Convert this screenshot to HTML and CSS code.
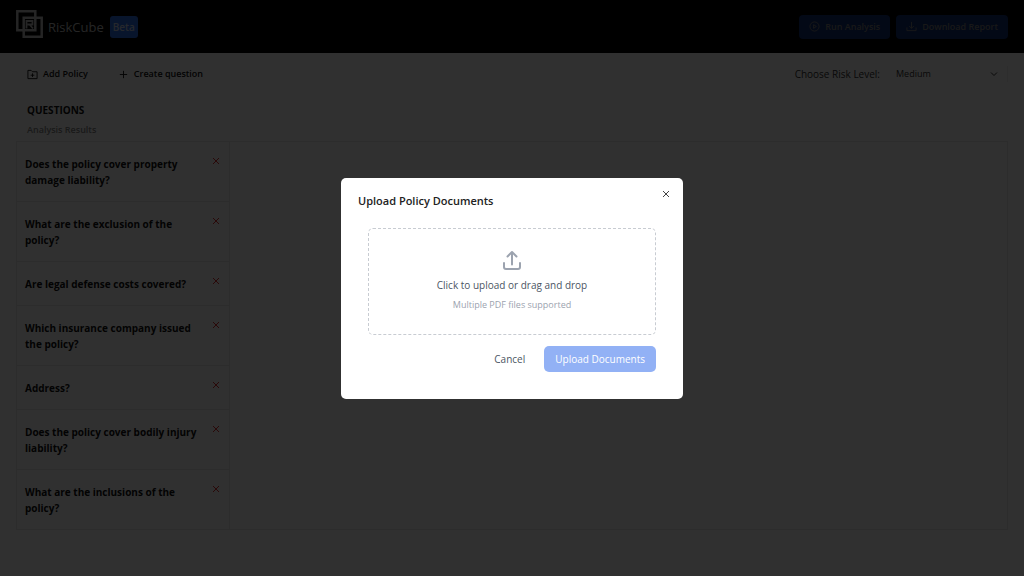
FILE: index.html
```html
<!DOCTYPE html>
<html lang="en">
<head>
<meta charset="utf-8">
<meta name="viewport" content="width=device-width, initial-scale=1">
<title>RiskCube</title>
<link rel="stylesheet" href="styles.css">
</head>
<body>
<header class="topbar">
  <div class="brand">
    <svg class="logo" viewBox="0 0 27 28" fill="none" aria-hidden="true">
      <path d="M1.300 1.300h18v19h-18zM7.700 7.700h18v19h-18z" stroke-width="2.500"/>
      <path d="M10.500 18.500V11h6v3.500h-5M13.500 14.500l3.500 4" stroke-width="1.800"/>
    </svg>
    <span class="brand-name">RiskCube</span>
    <span class="beta">Beta</span>
  </div>
  <div class="actions">
    <button class="primary" type="button">
      <svg class="icon" viewBox="0 0 24 24" aria-hidden="true"><circle cx="12" cy="12" r="10"/><path d="M10 8l6 4-6 4z"/></svg>
      Run Analysis
    </button>
    <button class="primary" type="button">
      <svg class="icon" viewBox="0 0 24 24" aria-hidden="true"><path d="M2 14v7h20v-7M12 2v14M7 11l5 5 5-5"/></svg>
      Download Report
    </button>
  </div>
</header>
<main class="page">
  <div class="toolbar">
    <div class="tools">
      <button class="tool" type="button">
        <svg class="icon" viewBox="0 0 24 24" aria-hidden="true"><path d="M2 3h7l3 3h10v15H2zM12 9.500v8M8 13.500h8"/></svg>
        Add Policy
      </button>
      <button class="tool" type="button">
        <svg class="icon" viewBox="0 0 24 24" aria-hidden="true"><path d="M12 4v16M4 12h16"/></svg>
        Create question
      </button>
    </div>
    <div class="risk">
      <label for="risk">Choose Risk Level:</label>
      <div class="select-wrap">
        <select id="risk"><option>Low</option><option selected>Medium</option><option>High</option></select>
        <svg class="chevron" viewBox="0 0 8 8" aria-hidden="true"><path d="M1 2.500l3 3 3-3"/></svg>
      </div>
    </div>
  </div>
  <div class="heading">
    <h1>QUESTIONS</h1>
    <p>Analysis Results</p>
  </div>
  <div class="board">
    <ul class="questions">
      <li><span>Does the policy cover property damage liability?</span><button class="remove" type="button" aria-label="Remove question"><svg viewBox="0 0 8 8" aria-hidden="true"><path d="M1 1l6 6M7 1L1 7"/></svg></button></li>
      <li><span>What are the exclusion of the policy?</span><button class="remove" type="button" aria-label="Remove question"><svg viewBox="0 0 8 8" aria-hidden="true"><path d="M1 1l6 6M7 1L1 7"/></svg></button></li>
      <li><span>Are legal defense costs covered?</span><button class="remove" type="button" aria-label="Remove question"><svg viewBox="0 0 8 8" aria-hidden="true"><path d="M1 1l6 6M7 1L1 7"/></svg></button></li>
      <li><span>Which insurance company issued the policy?</span><button class="remove" type="button" aria-label="Remove question"><svg viewBox="0 0 8 8" aria-hidden="true"><path d="M1 1l6 6M7 1L1 7"/></svg></button></li>
      <li><span>Address?</span><button class="remove" type="button" aria-label="Remove question"><svg viewBox="0 0 8 8" aria-hidden="true"><path d="M1 1l6 6M7 1L1 7"/></svg></button></li>
      <li><span>Does the policy cover bodily injury liability?</span><button class="remove" type="button" aria-label="Remove question"><svg viewBox="0 0 8 8" aria-hidden="true"><path d="M1 1l6 6M7 1L1 7"/></svg></button></li>
      <li><span>What are the inclusions of the policy?</span><button class="remove" type="button" aria-label="Remove question"><svg viewBox="0 0 8 8" aria-hidden="true"><path d="M1 1l6 6M7 1L1 7"/></svg></button></li>
    </ul>
  </div>
</main>
<div class="overlay">
  <section class="modal" role="dialog" aria-modal="true" aria-labelledby="dialog-title">
    <div class="modal-head">
      <h2 id="dialog-title">Upload Policy Documents</h2>
      <button class="close" type="button" aria-label="Close"><svg viewBox="0 0 8 8" aria-hidden="true"><path d="M1 1l6 6M7 1L1 7"/></svg></button>
    </div>
    <div class="modal-body">
      <button class="dropzone" type="button">
        <svg class="upload" viewBox="0 0 20 20" aria-hidden="true"><path d="M2 13v4a2 2 0 0 0 2 2h12a2 2 0 0 0 2-2v-4M10 14.500V2.500M5.500 6.500L10 2 14.500 6.500"/></svg>
        <span class="drop-title">Click to upload or drag and drop</span>
        <span class="drop-note">Multiple PDF files supported</span>
      </button>
      <div class="modal-actions">
        <button class="cancel" type="button">Cancel</button>
        <button class="submit" type="button" disabled>Upload Documents</button>
      </div>
    </div>
  </section>
</div>
</body>
</html>
```
FILE: styles.css
```css
* { box-sizing: border-box; }
body {
  margin: 0;
  min-height: 100vh;
  background: #fff;
  color: #111;
  font: 10px/16px "Segoe UI", "Open Sans", sans-serif;
}
button, select { font: inherit; color: inherit; border: 0; background: none; padding: 0; }
h1, h2, p, ul { margin: 0; padding: 0; }
svg { display: block; fill: none; stroke: currentColor; flex: none; }

.topbar {
  display: flex;
  justify-content: space-between;
  align-items: center;
  height: 53px;
  padding: 0 16px;
  background: #000;
}
.brand { display: flex; align-items: center; color: #c4c4c4; }
.logo { width: 27px; height: 28px; margin-bottom: 6px; }
.brand-name { margin-left: 5px; font-size: 13px; }
.beta {
  margin-left: 6px;
  padding: 3px;
  border-radius: 3px;
  background: #2f6fea;
  color: #c9d6ea;
  font-weight: 600;
}
.actions { display: flex; gap: 6px; }
.primary {
  display: flex;
  align-items: center;
  gap: 5px;
  height: 24px;
  padding: 0 10px;
  border-radius: 4px;
  background: #123075;
  color: #808080;
  font-size: 9px;
  font-weight: 600;
}
.icon { width: 11px; height: 11px; stroke-width: 2; }

.page { padding: 8px 16px; }
.toolbar { display: flex; justify-content: space-between; align-items: center; height: 26px; }
.tools { display: flex; gap: 30px; padding-left: 11px; }
.tool { display: flex; align-items: center; gap: 5px; font-size: 9px; font-weight: 600; }
.risk { display: flex; align-items: center; gap: 16px; color: #333; }
.select-wrap { display: grid; align-items: center; width: 112px; border-right: 1px solid #eee; }
.select-wrap > * { grid-area: 1 / 1; }
.select-wrap select { width: 100%; appearance: none; font-size: 9px; font-weight: 500; }
.chevron { width: 8px; height: 8px; margin-right: 9px; justify-self: end; pointer-events: none; }

.heading { padding: 15px 11px 3px; }
.heading h1 { font-size: 10px; line-height: 16px; font-weight: 700; }
.heading p { margin-top: 4px; color: #888; font-weight: 600; font-size: 9px; }
.board { border: 1px solid #ebebeb; }
.questions { width: 213px; border-right: 1px solid #ebebeb; list-style: none; }
.questions li {
  display: flex;
  justify-content: space-between;
  align-items: flex-start;
  gap: 10px;
  padding: 14px 8px 13px;
  border-bottom: 1px solid #ebebeb;
  font-weight: 700;
}
.questions li:last-child { border-bottom: 0; }
.remove { padding: 1px; color: #e03131; }
.remove svg, .close svg { width: 8px; height: 8px; }

.overlay {
  position: fixed;
  inset: 0;
  display: grid;
  place-items: center;
  background: rgba(0, 0, 0, 0.81);
}
.modal {
  width: 342px;
  max-width: 90%;
  padding: 12px 13px 27px 17px;
  border-radius: 5px;
  background: #fff;
}
.modal-head { display: flex; justify-content: space-between; align-items: flex-start; }
.modal-head h2 { padding-top: 3px; font-size: 11px; line-height: 16px; font-weight: 600; color: #222; }
.close { color: #444; }
.modal-body { padding: 19px 14px 0 10px; }
.dropzone {
  display: flex;
  flex-direction: column;
  align-items: center;
  width: 100%;
  padding: 21px;
  border: 1px dashed #c8ccd2;
  border-radius: 5px;
}
.upload { width: 20px; height: 20px; color: #9ca3af; stroke-width: 2; stroke-linecap: round; stroke-linejoin: round; }
.drop-title { margin-top: 7px; color: #4b5563; }
.drop-note { margin-top: 4px; color: #9ca3af; font-size: 9px; }
.modal-actions { display: flex; justify-content: flex-end; gap: 8px; margin-top: 11px; }
.cancel { padding: 0 11px; color: #4b5563; }
.submit { height: 26px; padding: 0 11px; border-radius: 5px; background: #92b1f5; color: #fff; }
```
